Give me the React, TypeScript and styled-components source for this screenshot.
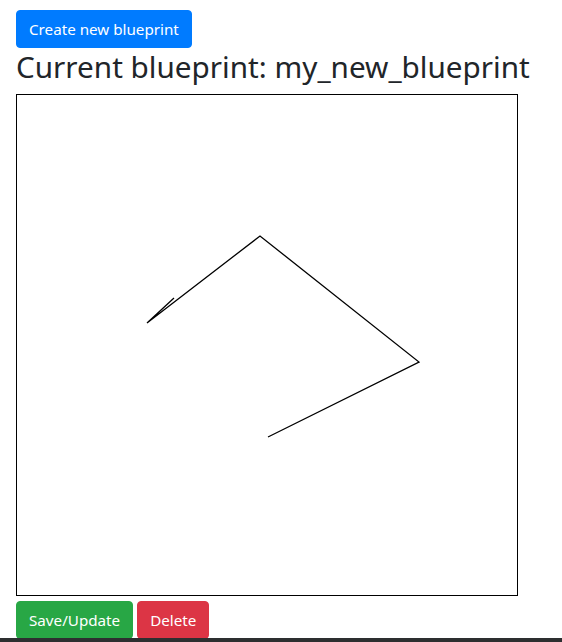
import React from "react";
import styled, { createGlobalStyle } from "styled-components";

const points: [number, number][] = [
  [157, 203],
  [130, 228],
  [243, 141],
  [402, 267],
  [251, 342],
];

const App = () => {
  return (
    <>
      <GlobalStyle />
      <Page>
        <Btn $variant="primary">Create new blueprint</Btn>
        <Title>Current blueprint: my_new_blueprint</Title>
        <Board width={500} height={500} viewBox="0 0 500 500">
          <polyline
            points={points.map((p) => p.join(",")).join(" ")}
            fill="none"
            stroke="#000"
            strokeWidth={1.3}
          />
        </Board>
        <Actions>
          <Btn $variant="success">Save/Update</Btn>
          <Btn $variant="danger">Delete</Btn>
        </Actions>
      </Page>
      <BottomBar />
    </>
  );
};

export default App;

const GlobalStyle = createGlobalStyle`
  body {
    margin: 0;
    background: #fff;
    color: #212529;
    font-family: "Noto Sans", "Open Sans", Arial, sans-serif;
  }
`;

const colors = {
  primary: "#007bff",
  success: "#28a745",
  danger: "#dc3545",
};

const Page = styled.div`
  padding: 10px 16px 0;
`;

const Btn = styled.button<{ $variant: keyof typeof colors }>`
  height: 38px;
  padding: 0 12px;
  font-family: inherit;
  font-size: 15.2px;
  color: #fff;
  background-color: ${(p) => colors[p.$variant]};
  border: 1px solid ${(p) => colors[p.$variant]};
  border-radius: 4px;
  cursor: pointer;
`;

const Title = styled.h2`
  margin: 0 0 8px;
  font-size: 29.7px;
  font-weight: 400;
  line-height: 38px;
`;

const Board = styled.svg`
  display: block;
  border: 1px solid #000;
`;

const Actions = styled.div`
  display: flex;
  gap: 4px;
  margin-top: 5px;
`;

const BottomBar = styled.div`
  position: fixed;
  left: 0;
  right: 0;
  bottom: 0;
  height: 4px;
  background: #2d2f30;
`;
